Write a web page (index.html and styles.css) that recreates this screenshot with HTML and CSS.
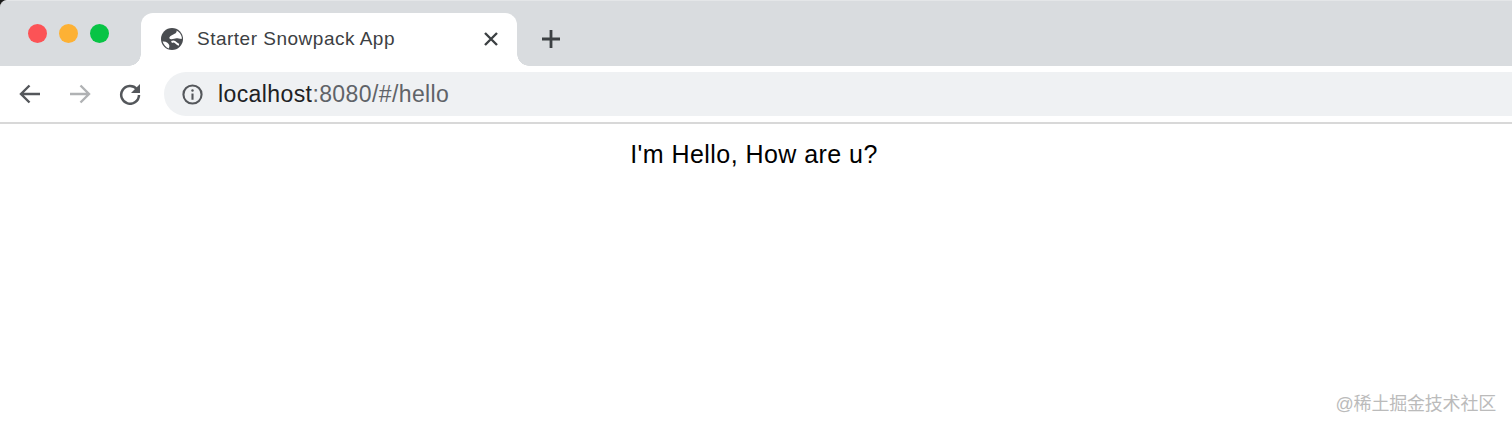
FILE: index.html
```html
<!DOCTYPE html>
<html lang="en">
<head>
  <meta charset="UTF-8">
  <title>Starter Snowpack App</title>
  <link rel="stylesheet" href="styles.css">
</head>
<body>
  <div class="tabbar">
    <div class="lights">
      <span class="light red"></span>
      <span class="light orange"></span>
      <span class="light green"></span>
    </div>
    <div class="tab">
      <svg class="globe" viewBox="0 0 22 22">
        <circle cx="11" cy="11" r="11" fill="#494c50"/>
        <path d="M15.500 2.500c.6 1.300-.4 2.500-1.900 3.300-1.700.9-4 1.800-5 3.300-.7 1.100 0 2 1.600 2.100 2 .1 3.600-1 5.200-1 1.500 0 3 .4 5.300.9l.1-1.800c-.5-3-2.500-5.600-5.300-6.800z" fill="#fff"/>
        <path d="M1.600 13.500c1.800-.2 3.500.2 4.800 1.200 1.500 1.100 2.300 2.700 1.900 4-.2.700-.3 1.300-.4 1.800-3-1.100-5.300-3.700-6.300-7z" fill="#fff"/>
        <path d="M10.500 14c1.500-.7 3.500-.3 4.500.8.900 1 1.500 1.700 3 2" fill="none" stroke="#fff" stroke-width="2"/>
      </svg>
      <span class="tab-title">Starter Snowpack App</span>
      <svg class="tab-close" viewBox="0 0 14 14">
        <path d="M1 1l12 12M13 1L1 13" fill="none" stroke="#3c4043" stroke-width="2.400"/>
      </svg>
    </div>
    <svg class="new-tab" viewBox="0 0 20 20">
      <path d="M10 1v18M1 10h18" fill="none" stroke="#3c4043" stroke-width="2.800"/>
    </svg>
  </div>

  <div class="toolbar">
    <svg class="nav-icon" viewBox="0 0 22 20">
      <path d="M21 10H2.500M10.500 1.500L2 10l8.500 8.500" fill="none" stroke="#54575b" stroke-width="2.400"/>
    </svg>
    <svg class="nav-icon" viewBox="0 0 22 20">
      <path d="M1 10h18.500M11.500 1.500L20 10l-8.500 8.500" fill="none" stroke="#b0b2b4" stroke-width="2.400"/>
    </svg>
    <svg class="nav-icon" viewBox="0 0 22 22">
      <path d="M17.800 6A8.900 8.900 0 1 0 20 12" fill="none" stroke="#54575b" stroke-width="2.500"/>
      <path d="M21 1v9h-9z" fill="#54575b"/>
    </svg>
    <div class="omnibox">
      <svg class="info" viewBox="0 0 22 22">
        <circle cx="11" cy="11" r="9.500" fill="none" stroke="#54575b" stroke-width="2.200"/>
        <path d="M11 10v6.500" fill="none" stroke="#54575b" stroke-width="2.200"/>
        <circle cx="11" cy="6.800" r="1.300" fill="#54575b"/>
      </svg>
      <span class="url"><span class="host">localhost</span>:8080/#/hello</span>
    </div>
  </div>

  <main class="page">
    <p class="hello">I'm Hello, How are u?</p>
  </main>

  <div class="watermark">@稀土掘金技术社区</div>
</body>
</html>
```

FILE: styles.css
```css
* {
  margin: 0;
  padding: 0;
  box-sizing: border-box;
}

html, body {
  height: 100%;
}

/* dark body only shows at the rounded window corner */
body {
  background: #1a1a1a;
  font-family: "Liberation Sans", Arial, sans-serif;
  overflow: hidden;
  position: relative;
  display: flex;
  flex-direction: column;
}

.tabbar {
  height: 66px;
  flex: none;
  display: flex;
  align-items: flex-end;
  background: #d9dcdf;
  border-top: 1px solid #e4e6e8;
  border-top-left-radius: 7px;
}

.lights {
  align-self: flex-start;
  display: flex;
  gap: 12px;
  width: 141px;
  padding: 23px 0 0 28px;
}

.light {
  width: 19px;
  height: 19px;
  border-radius: 50%;
}

.red { background: #fc5356; }
.orange { background: #fdb134; }
.green { background: #08c445; }

.tab {
  position: relative;
  width: 376px;
  height: 53px;
  background: #fff;
  border-radius: 12px 12px 0 0;
  display: flex;
  align-items: center;
  padding: 0 19px 1px 20px;
}

/* little curves at the foot of the tab */
.tab::before,
.tab::after {
  content: "";
  position: absolute;
  bottom: 0;
  width: 12px;
  height: 12px;
}

.tab::before {
  left: -12px;
  background: radial-gradient(circle at 0 0, transparent 11.500px, #fff 12px);
}

.tab::after {
  right: -12px;
  background: radial-gradient(circle at 100% 0, transparent 11.500px, #fff 12px);
}

.globe {
  width: 22px;
  height: 22px;
  flex: none;
}

.tab-title {
  margin-left: 14px;
  flex: 1;
  font-size: 19px;
  color: #3c4043;
  letter-spacing: 0.5px;
}

.tab-close {
  width: 14px;
  height: 14px;
  flex: none;
}

.new-tab {
  width: 20px;
  height: 20px;
  margin: 0 0 17px 24px;
}

.toolbar {
  height: 58px;
  flex: none;
  display: flex;
  align-items: center;
  background: #fff;
  border-bottom: 2px solid #d8d8d8;
  padding: 0 0 0 19px;
  gap: 28px;
}

.nav-icon {
  width: 22px;
  height: 22px;
  flex: none;
}

.omnibox {
  flex: 1;
  height: 44px;
  margin: 0 0 0 -5px;
  background: #eff1f3;
  border-radius: 22px 0 0 22px;
  display: flex;
  align-items: center;
  padding-left: 18px;
}

.info {
  width: 21px;
  height: 21px;
  flex: none;
}

.url {
  margin-left: 15px;
  font-size: 23px;
  letter-spacing: 0.4px;
  color: #5f6368;
}

.host {
  color: #202124;
}

.page {
  flex: 1;
  background: #fff;
  text-align: center;
  padding: 16px 4px 0 0;
}

.hello {
  font-size: 25px;
  letter-spacing: 0.45px;
  line-height: 28px;
  color: #000;
}

.watermark {
  position: absolute;
  right: 16px;
  bottom: 14px;
  font-family: "Liberation Sans", "Noto Sans CJK SC", sans-serif;
  font-size: 18px;
  letter-spacing: -0.2px;
  line-height: 22px;
  color: #bbb;
}
```
